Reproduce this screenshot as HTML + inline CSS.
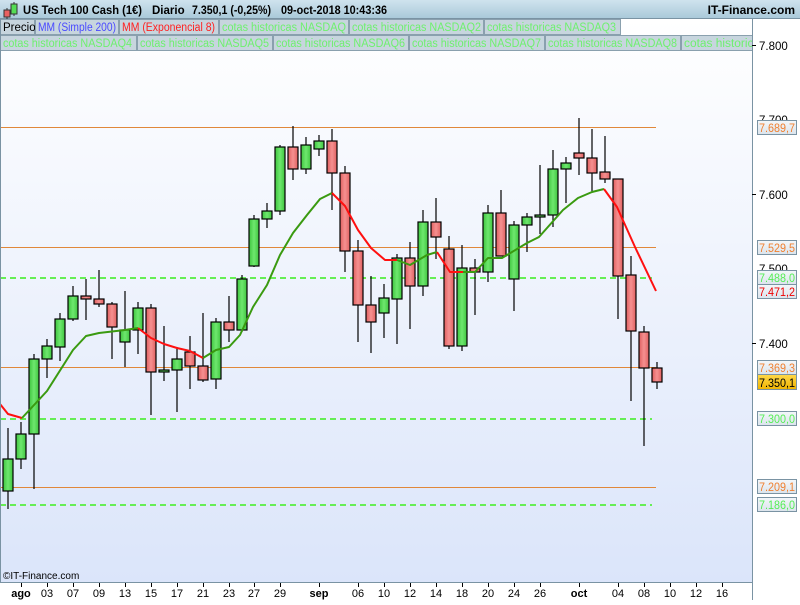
<!DOCTYPE html>
<html><head><meta charset="utf-8"><style>
body{margin:0;width:800px;height:600px;overflow:hidden;background:#fff;font-family:"Liberation Sans",sans-serif;}
svg text{font-family:"Liberation Sans",sans-serif;}
</style></head><body>
<svg width="800" height="600" xmlns="http://www.w3.org/2000/svg">
<defs>
<linearGradient id="bg" x1="0" y1="0" x2="0" y2="1"><stop offset="0" stop-color="#ffffff"/><stop offset="1" stop-color="#dbe5fa"/></linearGradient>
<linearGradient id="hd" x1="0" y1="0" x2="0" y2="1"><stop offset="0" stop-color="#cfe3ee"/><stop offset="1" stop-color="#a8c8d8"/></linearGradient>
<linearGradient id="g" x1="0" y1="0" x2="1" y2="0"><stop offset="0" stop-color="#3fc43f"/><stop offset="0.5" stop-color="#6ee86e"/><stop offset="1" stop-color="#3fc43f"/></linearGradient>
<linearGradient id="r" x1="0" y1="0" x2="1" y2="0"><stop offset="0" stop-color="#e06060"/><stop offset="0.5" stop-color="#f59090"/><stop offset="1" stop-color="#e06060"/></linearGradient>
<linearGradient id="lb" x1="0" y1="0" x2="0" y2="1"><stop offset="0" stop-color="#f4f7fa"/><stop offset="1" stop-color="#dbe4ec"/></linearGradient>
<linearGradient id="yl" x1="0" y1="0" x2="0" y2="1"><stop offset="0" stop-color="#ffd84a"/><stop offset="1" stop-color="#f0b400"/></linearGradient>
</defs>
<rect x="0" y="19" width="752" height="563" fill="url(#bg)"/>
<rect x="752" y="19" width="48" height="581" fill="#fff"/>
<!-- header -->
<rect x="0" y="0" width="800" height="19" fill="url(#hd)"/>
<line x1="0" y1="18.5" x2="800" y2="18.5" stroke="#7a93a3"/>
<line x1="7" y1="8" x2="7" y2="20" stroke="#333"/><rect x="4" y="10" width="6" height="7" fill="#e86060" stroke="#333"/>
<line x1="14" y1="2" x2="14" y2="16" stroke="#333"/><rect x="11" y="4" width="6" height="10" fill="#55dd55" stroke="#333"/>
<g font-size="11.5" font-weight="bold" fill="#000">
<text x="23" y="14" textLength="119" lengthAdjust="spacingAndGlyphs">US Tech 100 Cash (1€)</text>
<text x="152" y="14">Diario</text>
<text x="192" y="14" textLength="79" lengthAdjust="spacingAndGlyphs">7.350,1 (-0,25%)</text>
<text x="281" y="14" textLength="106" lengthAdjust="spacingAndGlyphs">09-oct-2018 10:43:36</text>
</g>
<text x="795" y="14" font-size="12" font-weight="bold" fill="#000" text-anchor="end">IT-Finance.com</text>
<!-- legend -->
<g font-size="11.5">
<rect x="0.5" y="19.5" width="34" height="15" fill="#c7d5de" stroke="#8aa0ae"/><text x="3" y="31" fill="#000">Precio</text>
<rect x="35.5" y="19.5" width="83" height="15" fill="#c7d5de" stroke="#8aa0ae"/><text x="38" y="31" fill="#4a4aff" textLength="78" lengthAdjust="spacingAndGlyphs">MM (Simple 200)</text>
<rect x="119.5" y="19.5" width="99" height="15" fill="#c7d5de" stroke="#8aa0ae"/><text x="122" y="31" fill="#ff2020" textLength="93" lengthAdjust="spacingAndGlyphs">MM (Exponencial 8)</text>
<rect x="219.5" y="19.5" width="129" height="15" fill="#c7d5de" stroke="#8aa0ae"/><text x="222" y="31" fill="#6ef06e" textLength="124" lengthAdjust="spacingAndGlyphs">cotas historicas NASDAQ</text>
<rect x="349.5" y="19.5" width="134" height="15" fill="#c7d5de" stroke="#8aa0ae"/><text x="352" y="31" fill="#6ef06e" textLength="129" lengthAdjust="spacingAndGlyphs">cotas historicas NASDAQ2</text>
<rect x="484.5" y="19.5" width="136" height="15" fill="#c7d5de" stroke="#8aa0ae"/><text x="487" y="31" fill="#6ef06e" textLength="129" lengthAdjust="spacingAndGlyphs">cotas historicas NASDAQ3</text>
<rect x="0.5" y="35.5" width="136" height="15" fill="#c7d5de" stroke="#8aa0ae"/><text x="3" y="47" fill="#6ef06e" textLength="129" lengthAdjust="spacingAndGlyphs">cotas historicas NASDAQ4</text>
<rect x="137.5" y="35.5" width="135" height="15" fill="#c7d5de" stroke="#8aa0ae"/><text x="140" y="47" fill="#6ef06e" textLength="129" lengthAdjust="spacingAndGlyphs">cotas historicas NASDAQ5</text>
<rect x="273.5" y="35.5" width="135" height="15" fill="#c7d5de" stroke="#8aa0ae"/><text x="276" y="47" fill="#6ef06e" textLength="129" lengthAdjust="spacingAndGlyphs">cotas historicas NASDAQ6</text>
<rect x="409.5" y="35.5" width="135" height="15" fill="#c7d5de" stroke="#8aa0ae"/><text x="412" y="47" fill="#6ef06e" textLength="129" lengthAdjust="spacingAndGlyphs">cotas historicas NASDAQ7</text>
<rect x="545.5" y="35.5" width="135" height="15" fill="#c7d5de" stroke="#8aa0ae"/><text x="548" y="47" fill="#6ef06e" textLength="129" lengthAdjust="spacingAndGlyphs">cotas historicas NASDAQ8</text>
<svg x="681" y="35" width="71" height="16"><rect x="0.5" y="0.5" width="90" height="15" fill="#c7d5de" stroke="#8aa0ae"/><text x="3" y="12" fill="#6ef06e" font-size="11.5" textLength="82" lengthAdjust="spacingAndGlyphs">cotas historicas</text></svg>
</g>
<!-- horizontal lines -->
<g stroke="#e0883a" stroke-width="1">
<line x1="0" y1="127.5" x2="656" y2="127.5"/><line x1="0" y1="247.5" x2="656" y2="247.5"/>
<line x1="0" y1="367.5" x2="656" y2="367.5"/><line x1="0" y1="487.5" x2="656" y2="487.5"/>
</g>
<g stroke="#66ee55" stroke-width="2" stroke-dasharray="6,4">
<line x1="0" y1="278" x2="652" y2="278"/><line x1="0" y1="419" x2="652" y2="419"/><line x1="0" y1="505" x2="652" y2="505"/>
</g>
<!-- candles -->
<g stroke="#000" stroke-width="1.2">
<line x1="8" y1="428" x2="8" y2="509"/><rect x="3" y="459" width="10" height="32" fill="url(#g)"/>
<line x1="21" y1="422" x2="21" y2="469"/><rect x="16" y="434" width="10" height="25" fill="url(#g)"/>
<line x1="34" y1="354" x2="34" y2="489"/><rect x="29" y="359" width="10" height="75" fill="url(#g)"/>
<line x1="47" y1="339" x2="47" y2="378"/><rect x="42" y="346" width="10" height="13" fill="url(#g)"/>
<line x1="60" y1="313" x2="60" y2="361"/><rect x="55" y="319" width="10" height="28" fill="url(#g)"/>
<line x1="73" y1="286" x2="73" y2="321"/><rect x="68" y="296" width="10" height="23" fill="url(#g)"/>
<line x1="86" y1="279" x2="86" y2="320"/><rect x="81" y="296" width="10" height="3" fill="url(#r)"/>
<line x1="99" y1="270" x2="99" y2="307"/><rect x="94" y="299" width="10" height="5" fill="url(#r)"/>
<line x1="112" y1="302" x2="112" y2="359"/><rect x="107" y="304" width="10" height="23" fill="url(#r)"/>
<line x1="125" y1="291" x2="125" y2="367"/><rect x="120" y="330" width="10" height="12" fill="url(#g)"/>
<line x1="138" y1="302" x2="138" y2="354"/><rect x="133" y="308" width="10" height="22" fill="url(#g)"/>
<line x1="151" y1="304" x2="151" y2="415"/><rect x="146" y="308" width="10" height="64" fill="url(#r)"/>
<line x1="164" y1="326" x2="164" y2="381"/><rect x="159" y="370" width="10" height="2" fill="url(#g)"/>
<line x1="177" y1="347" x2="177" y2="412"/><rect x="172" y="359" width="10" height="11" fill="url(#g)"/>
<line x1="190" y1="336" x2="190" y2="389"/><rect x="185" y="352" width="10" height="14" fill="url(#r)"/>
<line x1="203" y1="313" x2="203" y2="382"/><rect x="198" y="366" width="10" height="14" fill="url(#r)"/>
<line x1="216" y1="318" x2="216" y2="389"/><rect x="211" y="322" width="10" height="57" fill="url(#g)"/>
<line x1="229" y1="296" x2="229" y2="342"/><rect x="224" y="322" width="10" height="8" fill="url(#r)"/>
<line x1="242" y1="275" x2="242" y2="332"/><rect x="237" y="279" width="10" height="51" fill="url(#g)"/>
<line x1="254" y1="215" x2="254" y2="267"/><rect x="249" y="219" width="10" height="47" fill="url(#g)"/>
<line x1="267" y1="203" x2="267" y2="228"/><rect x="262" y="211" width="10" height="8" fill="url(#g)"/>
<line x1="280" y1="145" x2="280" y2="215"/><rect x="275" y="147" width="10" height="64" fill="url(#g)"/>
<line x1="293" y1="126" x2="293" y2="180"/><rect x="288" y="147" width="10" height="22" fill="url(#r)"/>
<line x1="306" y1="137" x2="306" y2="174"/><rect x="301" y="145" width="10" height="24" fill="url(#g)"/>
<line x1="319" y1="135" x2="319" y2="156"/><rect x="314" y="141" width="10" height="8" fill="url(#g)"/>
<line x1="332" y1="129" x2="332" y2="210"/><rect x="327" y="141" width="10" height="32" fill="url(#r)"/>
<line x1="345" y1="166" x2="345" y2="272"/><rect x="340" y="173" width="10" height="78" fill="url(#r)"/>
<line x1="358" y1="240" x2="358" y2="342"/><rect x="353" y="251" width="10" height="54" fill="url(#r)"/>
<line x1="371" y1="276" x2="371" y2="353"/><rect x="366" y="305" width="10" height="17" fill="url(#r)"/>
<line x1="384" y1="284" x2="384" y2="338"/><rect x="379" y="298" width="10" height="15" fill="url(#g)"/>
<line x1="397" y1="254" x2="397" y2="344"/><rect x="392" y="258" width="10" height="41" fill="url(#g)"/>
<line x1="410" y1="242" x2="410" y2="329"/><rect x="405" y="258" width="10" height="28" fill="url(#r)"/>
<line x1="423" y1="210" x2="423" y2="296"/><rect x="418" y="222" width="10" height="64" fill="url(#g)"/>
<line x1="436" y1="198" x2="436" y2="259"/><rect x="431" y="222" width="10" height="15" fill="url(#r)"/>
<line x1="449" y1="236" x2="449" y2="349"/><rect x="444" y="249" width="10" height="97" fill="url(#r)"/>
<line x1="462" y1="245" x2="462" y2="351"/><rect x="457" y="268" width="10" height="78" fill="url(#g)"/>
<line x1="475" y1="259" x2="475" y2="315"/><rect x="470" y="268" width="10" height="4" fill="url(#r)"/>
<line x1="488" y1="205" x2="488" y2="282"/><rect x="483" y="213" width="10" height="59" fill="url(#g)"/>
<line x1="501" y1="190" x2="501" y2="256"/><rect x="496" y="213" width="10" height="43" fill="url(#r)"/>
<line x1="514" y1="221" x2="514" y2="311"/><rect x="509" y="225" width="10" height="54" fill="url(#g)"/>
<line x1="527" y1="213" x2="527" y2="252"/><rect x="522" y="217" width="10" height="8" fill="url(#g)"/>
<line x1="540" y1="165" x2="540" y2="234"/><rect x="535" y="215" width="10" height="2" fill="url(#g)"/>
<line x1="553" y1="150" x2="553" y2="227"/><rect x="548" y="169" width="10" height="46" fill="url(#g)"/>
<line x1="566" y1="157" x2="566" y2="203"/><rect x="561" y="163" width="10" height="6" fill="url(#g)"/>
<line x1="579" y1="118" x2="579" y2="175"/><rect x="574" y="153" width="10" height="5" fill="url(#r)"/>
<line x1="592" y1="129" x2="592" y2="192"/><rect x="587" y="158" width="10" height="15" fill="url(#r)"/>
<line x1="605" y1="136" x2="605" y2="183"/><rect x="600" y="172" width="10" height="7" fill="url(#r)"/>
<line x1="618" y1="179" x2="618" y2="319"/><rect x="613" y="179" width="10" height="97" fill="url(#r)"/>
<line x1="631" y1="256" x2="631" y2="401"/><rect x="626" y="275" width="10" height="56" fill="url(#r)"/>
<line x1="644" y1="326" x2="644" y2="446"/><rect x="639" y="332" width="10" height="36" fill="url(#r)"/>
<line x1="657" y1="362" x2="657" y2="389"/><rect x="652" y="368" width="10" height="14" fill="url(#r)"/>
</g>
<!-- MA line -->
<g fill="none" stroke-width="2" stroke-linejoin="round">
<polyline stroke="#ff1010" points="0,404 8,414 22,418"/>
<polyline stroke="#3a9a10" points="22,418 47,391 73,350 86,336 99,333 125,330 138,328"/>
<polyline stroke="#ff1010" points="138,328 151,338 164,344 177,348 190,351 203,358"/>
<polyline stroke="#3a9a10" points="203,358 216,350 229,347 240,335 253,307 267,285 280,255 293,233 307,215 320,199 332,193"/>
<polyline stroke="#ff1010" points="332,193 345,206 358,230 371,248 385,260 397,260"/>
<polyline stroke="#3a9a10" points="397,260 410,265 427,255 437,252"/>
<polyline stroke="#ff1010" points="437,252 450,272 463,272"/>
<polyline stroke="#3a9a10" points="463,272 475,272 488,258 502,258 527,243 539,237 563,210 578,198 592,192 604,189"/>
<polyline stroke="#ff1010" points="604,189 617,207 635,247 656,291"/>
</g>
<!-- axes -->
<line x1="752.5" y1="19" x2="752.5" y2="600" stroke="#7a93a3"/>
<line x1="0" y1="582.5" x2="752" y2="582.5" stroke="#7a93a3"/>
<line x1="0.5" y1="19" x2="0.5" y2="582" stroke="#7a93a3"/>
<text x="3" y="579" font-size="10" fill="#000">©IT-Finance.com</text>
<g stroke="#000">
<line x1="752" y1="45.5" x2="756" y2="45.5"/><line x1="752" y1="194.5" x2="756" y2="194.5"/><line x1="752" y1="343.5" x2="756" y2="343.5"/>
</g>
<g font-size="11.5" fill="#000">
<text x="759" y="50">7.800</text><text x="759" y="124">7.700</text><text x="759" y="199">7.600</text><text x="759" y="273">7.500</text><text x="759" y="348">7.400</text>
</g>
<g font-size="11.5">
<rect x="757.5" y="120.5" width="39" height="14" fill="url(#lb)" stroke="#7a93a3"/><text x="759" y="132" fill="#f08030" textLength="36" lengthAdjust="spacingAndGlyphs">7.689,7</text>
<rect x="757.5" y="240.5" width="39" height="14" fill="url(#lb)" stroke="#7a93a3"/><text x="759" y="252" fill="#f08030" textLength="36" lengthAdjust="spacingAndGlyphs">7.529,5</text>
<rect x="757.5" y="270.5" width="39" height="14" fill="url(#lb)" stroke="#7a93a3"/><text x="759" y="282" fill="#55ee55" textLength="36" lengthAdjust="spacingAndGlyphs">7.488,0</text>
<rect x="757.5" y="284.5" width="39" height="14" fill="url(#lb)" stroke="#7a93a3"/><text x="759" y="296" fill="#ee0000" textLength="36" lengthAdjust="spacingAndGlyphs">7.471,2</text>
<rect x="757.5" y="360.5" width="39" height="14" fill="url(#lb)" stroke="#7a93a3"/><text x="759" y="372" fill="#f08030" textLength="36" lengthAdjust="spacingAndGlyphs">7.369,3</text>
<rect x="757.5" y="374.5" width="39" height="15" fill="url(#yl)" stroke="#7a93a3"/><text x="759" y="387" fill="#000" textLength="36" lengthAdjust="spacingAndGlyphs">7.350,1</text>
<rect x="757.5" y="411.5" width="39" height="14" fill="url(#lb)" stroke="#7a93a3"/><text x="759" y="423" fill="#55ee55" textLength="36" lengthAdjust="spacingAndGlyphs">7.300,0</text>
<rect x="757.5" y="479.5" width="39" height="14" fill="url(#lb)" stroke="#7a93a3"/><text x="759" y="491" fill="#f08030" textLength="36" lengthAdjust="spacingAndGlyphs">7.209,1</text>
<rect x="757.5" y="497.5" width="39" height="14" fill="url(#lb)" stroke="#7a93a3"/><text x="759" y="509" fill="#55ee55" textLength="36" lengthAdjust="spacingAndGlyphs">7.186,0</text>
</g>
<!-- x axis labels -->
<g font-size="11" fill="#000" text-anchor="middle">
<g stroke="#000">
<line x1="21.5" y1="583" x2="21.5" y2="587"/><line x1="47.5" y1="583" x2="47.5" y2="587"/><line x1="73.5" y1="583" x2="73.5" y2="587"/><line x1="99.5" y1="583" x2="99.5" y2="587"/><line x1="125.5" y1="583" x2="125.5" y2="587"/><line x1="151.5" y1="583" x2="151.5" y2="587"/><line x1="177.5" y1="583" x2="177.5" y2="587"/><line x1="203.5" y1="583" x2="203.5" y2="587"/><line x1="229.5" y1="583" x2="229.5" y2="587"/><line x1="254.5" y1="583" x2="254.5" y2="587"/><line x1="280.5" y1="583" x2="280.5" y2="587"/><line x1="319.5" y1="583" x2="319.5" y2="587"/><line x1="358.5" y1="583" x2="358.5" y2="587"/><line x1="384.5" y1="583" x2="384.5" y2="587"/><line x1="410.5" y1="583" x2="410.5" y2="587"/><line x1="436.5" y1="583" x2="436.5" y2="587"/><line x1="462.5" y1="583" x2="462.5" y2="587"/><line x1="488.5" y1="583" x2="488.5" y2="587"/><line x1="514.5" y1="583" x2="514.5" y2="587"/><line x1="540.5" y1="583" x2="540.5" y2="587"/><line x1="579.5" y1="583" x2="579.5" y2="587"/><line x1="618.5" y1="583" x2="618.5" y2="587"/><line x1="644.5" y1="583" x2="644.5" y2="587"/><line x1="670.5" y1="583" x2="670.5" y2="587"/><line x1="696.5" y1="583" x2="696.5" y2="587"/><line x1="722.5" y1="583" x2="722.5" y2="587"/>
</g>
<text x="21" y="597" font-weight="bold">ago</text><text x="47" y="597">03</text><text x="73" y="597">07</text><text x="99" y="597">09</text><text x="125" y="597">13</text><text x="151" y="597">15</text><text x="177" y="597">17</text><text x="203" y="597">21</text><text x="229" y="597">23</text><text x="254" y="597">27</text><text x="280" y="597">29</text><text x="319" y="597" font-weight="bold">sep</text><text x="358" y="597">06</text><text x="384" y="597">10</text><text x="410" y="597">12</text><text x="436" y="597">14</text><text x="462" y="597">18</text><text x="488" y="597">20</text><text x="514" y="597">24</text><text x="540" y="597">26</text><text x="579" y="597" font-weight="bold">oct</text><text x="618" y="597">04</text><text x="644" y="597">08</text><text x="670" y="597">10</text><text x="696" y="597">12</text><text x="722" y="597">16</text>
</g>
</svg>
</body></html>
